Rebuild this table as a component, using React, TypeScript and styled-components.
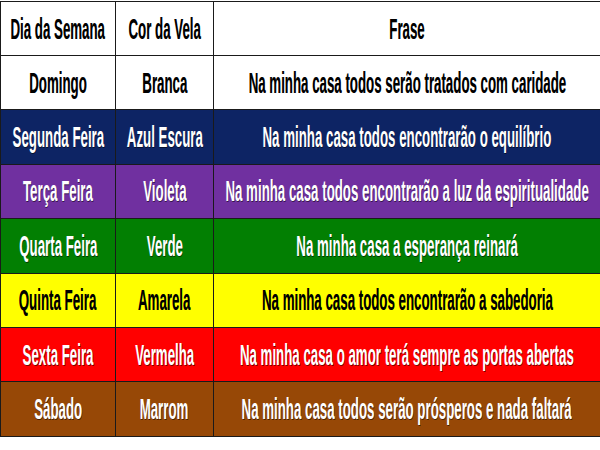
import React from 'react';
import styled, { createGlobalStyle } from 'styled-components';

const GlobalStyle = createGlobalStyle`
	html, body {
		margin: 0;
		padding: 0;
		background: #fff;
	}
`;

interface Day {
	day: string;
	color: string;
	phrase: string;
	bg: string;
	fg: string;
}

const days: Day[] = [
	{ day: 'Domingo', color: 'Branca', phrase: 'Na minha casa todos serão tratados com caridade', bg: '#ffffff', fg: '#000' },
	{ day: 'Segunda Feira', color: 'Azul Escura', phrase: 'Na minha casa todos encontrarão o equilíbrio', bg: '#0d2464', fg: '#fff' },
	{ day: 'Terça Feira', color: 'Violeta', phrase: 'Na minha casa todos encontrarão a luz da espiritualidade', bg: '#7030a0', fg: '#fff' },
	{ day: 'Quarta Feira', color: 'Verde', phrase: 'Na minha casa a esperança reinará', bg: '#027f02', fg: '#fff' },
	{ day: 'Quinta Feira', color: 'Amarela', phrase: 'Na minha casa todos encontrarão a sabedoria', bg: '#ffff00', fg: '#000' },
	{ day: 'Sexta Feira', color: 'Vermelha', phrase: 'Na minha casa o amor terá sempre as portas abertas', bg: '#ff0000', fg: '#fff' },
	{ day: 'Sábado', color: 'Marrom', phrase: 'Na minha casa todos serão prósperos e nada faltará', bg: '#974806', fg: '#fff' },
];

const Page = styled.div`
	width: 600px;
	height: 450px;
	padding-top: 1px;
	box-sizing: border-box;
	background: #fff;
`;

const Table = styled.table`
	width: 600px;
	border-collapse: collapse;
	table-layout: fixed;
`;

const Row = styled.tr<{ $height: number }>`
	height: ${p => p.$height}px;
`;

const Cell = styled.td<{ $bg: string; $fg: string }>`
	padding: 0;
	border: 1px solid #1a1a1a;
	background: ${p => p.$bg};
	color: ${p => p.$fg};
	overflow: visible;
`;

const CellInner = styled.div`
	display: flex;
	justify-content: center;
	align-items: center;
	width: 100%;
	height: 100%;
`;

const Label = styled.span<{ $light: boolean }>`
	flex-shrink: 0;
	display: inline-block;
	white-space: nowrap;
	font-family: 'Liberation Sans', Arial, sans-serif;
	font-weight: bold;
	font-size: 30px;
	line-height: 1;
	transform: scaleX(0.443);
	text-shadow: ${p => (p.$light ? '1px 1px 1px rgba(0, 0, 0, 0.55)' : '0 0 1px rgba(0, 0, 0, 0.3)')};
`;

const Col = styled.col<{ $width: number }>`
	width: ${p => p.$width}px;
`;

function TextCell({ text, bg, fg }: { text: string; bg: string; fg: string }) {
	return (
		<Cell $bg={bg} $fg={fg}>
			<CellInner>
				<Label $light={fg === '#fff'}>{text}</Label>
			</CellInner>
		</Cell>
	);
}

export default function App() {
	return (
		<Page>
			<GlobalStyle />
			<Table>
				<colgroup>
					<Col $width={115} />
					<Col $width={98} />
					<Col $width={387} />
				</colgroup>
				<tbody>
					<Row $height={54}>
						<TextCell text="Dia da Semana" bg="#fff" fg="#000" />
						<TextCell text="Cor da Vela" bg="#fff" fg="#000" />
						<TextCell text="Frase" bg="#fff" fg="#000" />
					</Row>
					{days.map(d => (
						<Row key={d.day} $height={54.4}>
							<TextCell text={d.day} bg={d.bg} fg={d.fg} />
							<TextCell text={d.color} bg={d.bg} fg={d.fg} />
							<TextCell text={d.phrase} bg={d.bg} fg={d.fg} />
						</Row>
					))}
				</tbody>
			</Table>
		</Page>
	);
}
